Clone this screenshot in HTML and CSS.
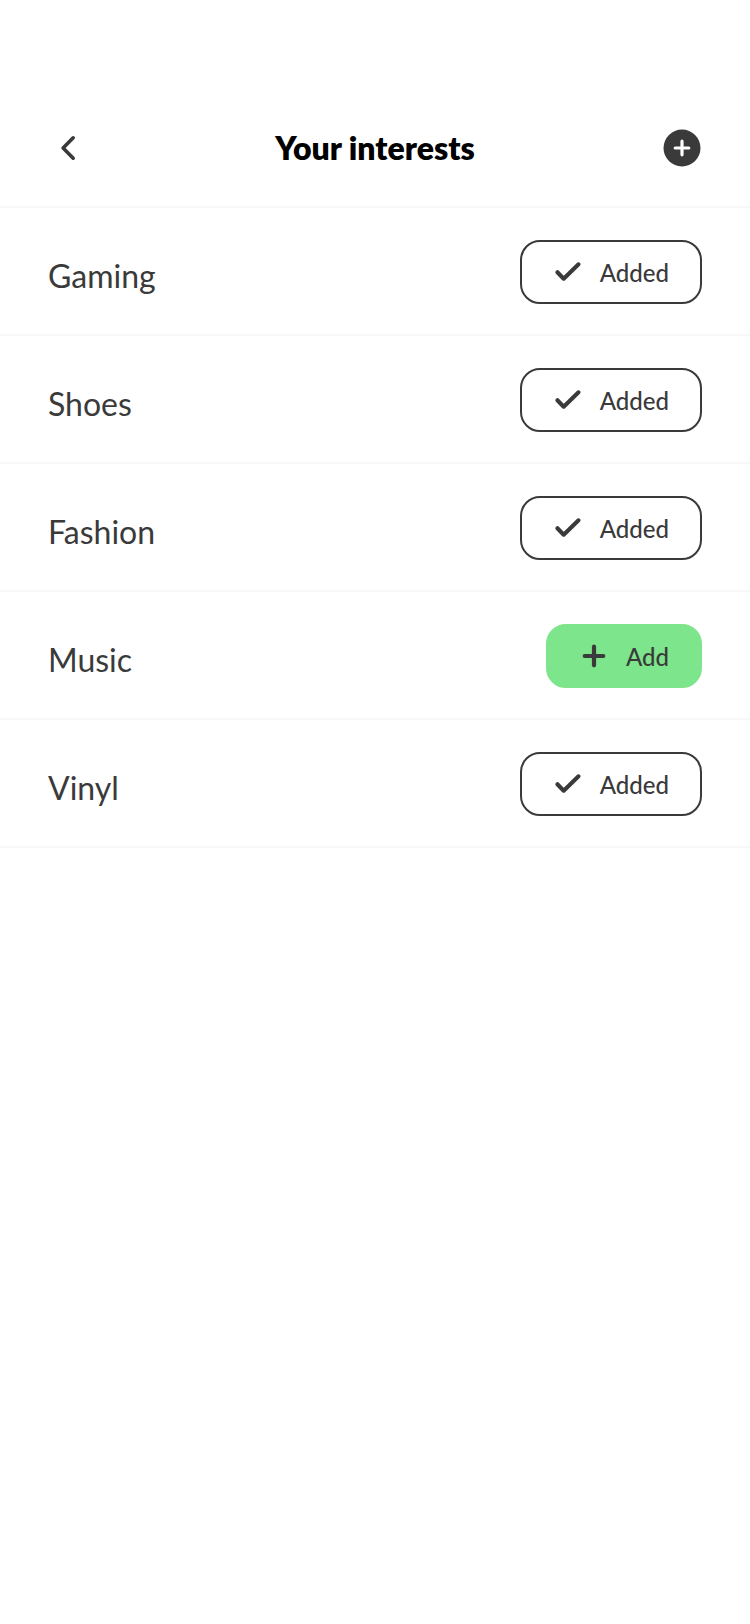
FILE: index.html
```html
<!DOCTYPE html>
<html lang="en">
<head>
<meta charset="utf-8">
<meta name="viewport" content="width=device-width, initial-scale=1">
<title>Your interests</title>
<link rel="stylesheet" href="styles.css">
</head>
<body>
<svg class="sprite" aria-hidden="true">
<symbol id="check" viewBox="0 0 30 30"><path stroke-width="4.100" d="M4.400 15.200 10.700 21.700 25.500 7.300"/></symbol>
<symbol id="plus" viewBox="0 0 30 30"><path stroke-width="4.200" d="M15 5.700v18.600M5.700 15h18.600"/></symbol>
</svg>
<header class="header">
<button class="icon-button" aria-label="Back"><svg class="back" viewBox="0 0 40 40"><path stroke-width="3.600" d="M25.200 9.800 15.100 20l10.100 10.200"/></svg></button>
<h1 class="title">Your interests</h1>
<button class="icon-button" aria-label="New interest"><svg class="create" viewBox="0 0 40 40"><circle cx="20" cy="20" r="18.500"/><path stroke-width="3.200" d="M20 13.200v13.600M13.200 20h13.600"/></svg></button>
</header>
<main>
<ul class="list">
<li class="row"><span class="name">Gaming</span><button class="toggle"><svg class="icon"><use href="#check"/></svg><span class="label">Added</span></button></li>
<li class="row"><span class="name">Shoes</span><button class="toggle"><svg class="icon"><use href="#check"/></svg><span class="label">Added</span></button></li>
<li class="row"><span class="name">Fashion</span><button class="toggle"><svg class="icon"><use href="#check"/></svg><span class="label">Added</span></button></li>
<li class="row"><span class="name">Music</span><button class="toggle add"><svg class="icon"><use href="#plus"/></svg><span class="label">Add</span></button></li>
<li class="row"><span class="name">Vinyl</span><button class="toggle"><svg class="icon"><use href="#check"/></svg><span class="label">Added</span></button></li>
</ul>
</main>
</body>
</html>
```

FILE: styles.css
```css
* {
  box-sizing: border-box;
}

body {
  margin: 0;
  background: #fff;
  color: #3a3a3a;
  font-family: Lato, sans-serif;
}

button {
  border: 0;
  padding: 0;
  background: none;
  color: inherit;
  font: inherit;
  cursor: pointer;
}

.sprite {
  display: none;
}

.header {
  display: flex;
  align-items: center;
  justify-content: space-between;
  padding: 128px 48px 38px;
  border-bottom: 2px solid #f8f8f8;
}

.title {
  margin: 0;
  color: #000;
  font-size: 32px;
  line-height: 40px;
  font-weight: 800;
}

.icon-button svg {
  display: block;
  width: 40px;
  height: 40px;
  fill: none;
  stroke: #3a3a3a;
  stroke-linecap: round;
  stroke-linejoin: round;
}

.icon-button .create {
  fill: #3a3a3a;
  stroke: none;
}

.icon-button .create path {
  stroke: #fff;
}

.list {
  margin: 0;
  padding: 0;
  list-style: none;
}

.row {
  display: flex;
  align-items: center;
  justify-content: space-between;
  padding: 32px 48px 30px;
  border-bottom: 2px solid #f8f8f8;
}

.name {
  padding-top: 8px;
  font-size: 32px;
  line-height: 40px;
}

.toggle {
  display: flex;
  align-items: center;
  gap: 17px;
  height: 64px;
  padding: 0 31px;
  border: 2px solid #3a3a3a;
  border-radius: 20px;
  font-size: 24px;
  line-height: 32px;
  font-weight: 500;
}

.toggle.add {
  border-color: #7de58b;
  background: #7de58b;
}

.label {
  padding-top: 2px;
}

.icon {
  width: 30px;
  height: 30px;
  fill: none;
  stroke: #3a3a3a;
  stroke-linecap: round;
  stroke-linejoin: round;
}
```
